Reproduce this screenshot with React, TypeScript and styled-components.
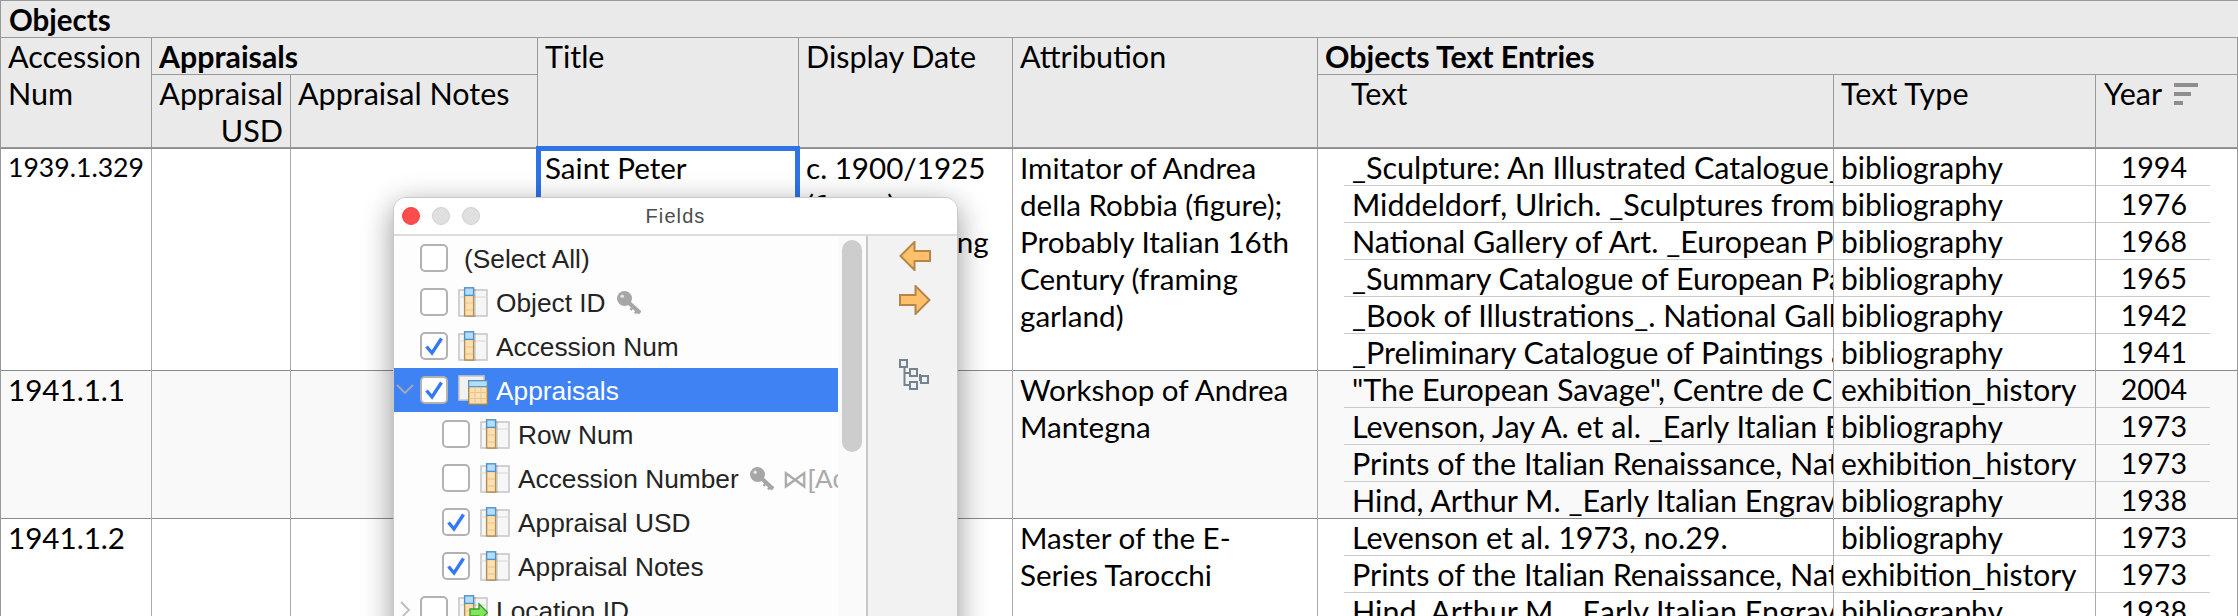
import React from "react";
import styled, { createGlobalStyle } from "styled-components";

const COLUMNS = "151px 139px 247px 261px 214px 305px 516px 262px 142px";

const GlobalStyle = createGlobalStyle`
  html, body {
    margin: 0;
    padding: 0;
    background: #fff;
  }
`;

const Page = styled.div`
  position: relative;
  width: 2238px;
  height: 616px;
  overflow: hidden;
  background: #fff;
  color: #000;
  font-family: Lato, "Open Sans", sans-serif;
  font-size: 29.6px;
  line-height: 37px;
`;

const Sheet = styled.div`
  width: 2238px;
  box-sizing: border-box;
  border-left: 1px solid #999;
`;

const TableName = styled.div`
  height: 36px;
  padding-left: 8px;
  border-top: 1px solid #999;
  border-bottom: 1px solid #999;
  background: #eaeaea;
  font-weight: 700;
  font-size: 29.5px;
`;

const HeaderGrid = styled.div`
  display: grid;
  grid-template-columns: ${COLUMNS};
  grid-template-rows: 37px 73px;
  height: 110px;
  background: #eaeaea;
  font-size: 30.5px;
`;

const HeaderCell = styled.div<{ $col: string; $row: string; $right?: boolean }>`
  grid-column: ${(p) => p.$col};
  grid-row: ${(p) => p.$row};
  box-sizing: border-box;
  padding: 0 7px;
  border-right: 1px solid #999;
  border-bottom: 1px solid #999;
  text-align: ${(p) => (p.$right ? "right" : "left")};
`;

const GroupCell = styled(HeaderCell)`
  font-weight: 700;
  font-size: 30.3px;
`;

const TextHeader = styled(HeaderCell)`
  padding-left: 33px;
`;

const YearHeader = styled(HeaderCell)`
  display: flex;
  align-items: flex-start;
  gap: 12px;
  padding-left: 8px;
`;

const SortIcon = styled.svg`
  width: 24px;
  height: 22px;
  margin-top: 8px;
  flex: none;
`;

const DataRow = styled.div<{ $even?: boolean; $tall?: boolean }>`
  display: grid;
  grid-template-columns: 151px 139px 247px 261px 214px 305px 920px;
  height: ${(p) => (p.$tall ? "222px" : "148px")};
  box-sizing: border-box;
  background: ${(p) => (p.$even ? "#f9f9f9" : "#fff")};
  border-top: 1px solid #8a8a8a;
`;

const Cell = styled.div<{ $size?: number }>`
  position: relative;
  box-sizing: border-box;
  padding: 0 7px;
  border-right: 1px solid #aaa;
  ${(p) => (p.$size ? `font-size: ${p.$size}px;` : "")}
`;

const AttributionCell = styled(Cell)`
  padding-right: 16px;
`;

const SelectedFrame = styled.div`
  position: absolute;
  top: -3px;
  left: -2px;
  right: -2px;
  bottom: -1px;
  border: 5px solid #2f74e6;
  pointer-events: none;
`;

const EntryList = styled.div`
  width: 920px;
  box-sizing: border-box;
  padding-left: 26px;
  padding-right: 27px;
  border-right: 1px solid #999;
`;

const EntryRow = styled.div`
  display: grid;
  grid-template-columns: 490px 262px 114px;
  height: 37px;
  box-sizing: border-box;
  border-bottom: 1px solid #ccc;

  &:last-child {
    border-bottom: 0;
  }
`;

const EntryText = styled.div`
  padding-left: 8px;
  font-size: 30.5px;
  white-space: nowrap;
  overflow: hidden;
  border-right: 1px solid #aaa;
`;

const EntryType = styled.div`
  padding-left: 7px;
  font-size: 30px;
  border-right: 1px solid #aaa;
`;

const EntryYear = styled.div`
  padding-right: 23px;
  font-size: 28.6px;
  text-align: right;
`;

const FieldsWindow = styled.div`
  position: absolute;
  left: 393px;
  top: 197px;
  width: 565px;
  height: 460px;
  box-sizing: border-box;
  border: 1px solid #c9c9c9;
  border-radius: 13px 13px 0 0;
  background: #fff;
  box-shadow: 0 8px 30px rgba(0, 0, 0, 0.42);
  overflow: hidden;
  font-family: "Liberation Sans", Arial, sans-serif;
  font-size: 26.3px;
  line-height: 44px;
  color: #242424;
`;

const TitleBar = styled.div`
  position: relative;
  display: flex;
  align-items: center;
  justify-content: center;
  height: 36px;
  border-bottom: 2px solid #dcdcdc;
  background: #fff;
  color: #4c4c4c;
  font-size: 20px;
  letter-spacing: 1.1px;
`;

const Lights = styled.div`
  position: absolute;
  left: 8px;
  top: 9px;
  display: flex;
  gap: 12px;
`;

const Light = styled.span<{ $red?: boolean }>`
  width: 18px;
  height: 18px;
  box-sizing: border-box;
  border-radius: 50%;
  background: ${(p) => (p.$red ? "#fc4d4d" : "#e0e0e0")};
  border: 1px solid ${(p) => (p.$red ? "#f04444" : "#cfcfcf")};
`;

const WindowBody = styled.div`
  display: flex;
  height: 420px;
`;

const FieldList = styled.div`
  width: 444px;
  flex: none;
  background: #fdfdfd;
  overflow: hidden;
`;

const FieldRow = styled.div<{ $selected?: boolean; $depth?: number }>`
  position: relative;
  display: flex;
  align-items: center;
  height: 44px;
  padding-left: ${(p) => 26 + (p.$depth || 0) * 22}px;
  white-space: nowrap;
  overflow: hidden;
  background: ${(p) => (p.$selected ? "#3f82f4" : "transparent")};
  color: ${(p) => (p.$selected ? "#fff" : "inherit")};
`;

const Chevron = styled.svg`
  position: absolute;
  left: 2px;
  top: 13px;
  width: 18px;
  height: 18px;
`;

const Checkbox = styled.span`
  display: flex;
  align-items: center;
  justify-content: center;
  width: 28px;
  height: 28px;
  flex: none;
  box-sizing: border-box;
  border: 2.5px solid #b2b2b2;
  border-radius: 5px;
  background: #fff;
`;

const IconSlot = styled.svg`
  width: 30px;
  height: 30px;
  flex: none;
  margin-left: 10px;
  margin-right: 8px;
`;

const Label = styled.span`
  margin-top: 2px;
`;

const PlainLabel = styled(Label)`
  margin-left: 16px;
`;

const KeyIcon = styled.svg`
  width: 24px;
  height: 24px;
  flex: none;
  margin-left: 11px;
  margin-top: 1px;
`;

const Relation = styled(Label)`
  margin-left: 8px;
  color: #aaa;
`;

const ScrollTrack = styled.div`
  width: 28px;
  flex: none;
  background: #fafafa;
  padding: 4px;
  box-sizing: border-box;
`;

const ScrollThumb = styled.div`
  width: 20px;
  height: 212px;
  border-radius: 10px;
  background: #cdcdcd;
`;

const SidePanel = styled.div`
  flex: 1;
  display: flex;
  flex-direction: column;
  align-items: flex-start;
  padding: 5px 0 0 31px;
  border-left: 2px solid #c8c8c8;
  background: #f2f2f2;
`;

const ArrowIcon = styled.svg`
  display: block;
  width: 32px;
  height: 30px;
  margin-bottom: 14px;
`;

const TreeIcon = styled.svg`
  display: block;
  width: 30px;
  height: 31px;
  margin-top: 30px;
`;

const CheckMark = () => (
  <svg width="20" height="20" viewBox="0 0 20 20">
    <path d="M2.5 10.5 L8 17 L17.5 2.5" fill="none" stroke="#3478f6" strokeWidth="3.4" />
  </svg>
);

const FieldGlyph = ({ arrow }: { arrow?: boolean }) => (
  <IconSlot viewBox="0 0 30 30">
    <rect x="1" y="3" width="28" height="26" fill="#f6f6f6" stroke="#c8c8c8" strokeWidth="1.6" />
    <line x1="1" y1="10" x2="29" y2="10" stroke="#dedede" strokeWidth="1.2" />
    <rect x="9" y="2" width="9" height="28" fill="#000" opacity="0.12" />
    <rect x="6.6" y="8" width="9" height="21" fill="#fde0ad" stroke="#b48c58" strokeWidth="1.4" />
    <line x1="7" y1="16" x2="15" y2="16" stroke="#e3c493" strokeWidth="1" />
    <line x1="7" y1="23" x2="15" y2="23" stroke="#e3c493" strokeWidth="1" />
    <rect x="6.6" y="0.8" width="9" height="7.6" fill="#b8dcf6" stroke="#4a93cc" strokeWidth="1.4" />
    {arrow && (
      <path
        d="M12 14 H21 V9 L29.5 17.5 L21 26 V21 H12 Z"
        fill="#7fe85a"
        stroke="#3f9c2e"
        strokeWidth="1.4"
      />
    )}
  </IconSlot>
);

const TableGlyph = () => (
  <IconSlot viewBox="0 0 30 30">
    <rect x="1" y="1" width="25" height="24" fill="#f2f2f2" stroke="#c8c8c8" strokeWidth="1.6" />
    <rect x="12" y="7" width="20" height="24" fill="#000" opacity="0.16" />
    <rect x="10.7" y="5.7" width="18.6" height="23.6" fill="#fde0ad" stroke="#a9824d" strokeWidth="1.4" />
    <rect x="10.7" y="5.7" width="18.6" height="6" fill="#b8dcf6" stroke="#4a93cc" strokeWidth="1.2" />
    <path d="M10.7 17.5 H29 M10.7 23.5 H29 M17 12 V29 M23 12 V29" stroke="#e3c493" strokeWidth="1" />
  </IconSlot>
);

const KeyGlyph = () => (
  <KeyIcon viewBox="0 0 24 24">
    <circle cx="7.5" cy="7.5" r="7.5" fill="#a6a6a6" />
    <circle cx="5.2" cy="5.2" r="1.8" fill="#e6e6e6" />
    <path d="M10.5 10.5 L23 22" stroke="#a6a6a6" strokeWidth="4.2" fill="none" />
    <path d="M16.5 15.5 L13.5 19 M20.5 19 L18 22.5" stroke="#a6a6a6" strokeWidth="2.4" fill="none" />
  </KeyIcon>
);

const ArrowGlyph = ({ left }: { left?: boolean }) => (
  <ArrowIcon viewBox="0 0 32 30">
    <path
      d={
        left
          ? "M1.5 15 L15.5 1 V10 H31 V20 H15.5 V29 Z"
          : "M30.5 15 L16.5 1 V10 H1 V20 H16.5 V29 Z"
      }
      fill="#ffc069"
      stroke="#b5854a"
      strokeWidth="2"
    />
  </ArrowIcon>
);

const fields = [
  { label: "Object ID", keyed: true, checked: false },
  { label: "Accession Num", checked: true },
];

const childFields = [
  { label: "Row Num", checked: false },
  { label: "Accession Number", checked: false, keyed: true, relation: "⋈[Accession Num]" },
  { label: "Appraisal USD", checked: true },
  { label: "Appraisal Notes", checked: true },
];

const rows = [
  {
    accession: "1939.1.329",
    accessionSize: 26.6,
    title: "Saint Peter",
    date: ["c. 1900/1925", "(figure), c.", "1500 (framing", "garland)"],
    attribution: "Imitator of Andrea della Robbia (figure); Probably Italian 16th Century (framing garland)",
    entries: [
      ["_Sculpture: An Illustrated Catalogue_. Washington, 1994", "bibliography", "1994"],
      ["Middeldorf, Ulrich. _Sculptures from the Samuel H. Kress", "bibliography", "1976"],
      ["National Gallery of Art. _European Paintings and Sculpture", "bibliography", "1968"],
      ["_Summary Catalogue of European Paintings and Sculpture", "bibliography", "1965"],
      ["_Book of Illustrations_. National Gallery of Art, Washington", "bibliography", "1942"],
      ["_Preliminary Catalogue of Paintings and Sculpture", "bibliography", "1941"],
    ],
  },
  {
    accession: "1941.1.1",
    attribution: "Workshop of Andrea Mantegna",
    entries: [
      ['"The European Savage", Centre de Culture', "exhibition_history", "2004"],
      ["Levenson, Jay A. et al. _Early Italian Engravings from", "bibliography", "1973"],
      ["Prints of the Italian Renaissance, National Gallery", "exhibition_history", "1973"],
      ["Hind, Arthur M. _Early Italian Engraving. A Critical", "bibliography", "1938"],
    ],
  },
  {
    accession: "1941.1.2",
    attribution: "Master of the E-Series Tarocchi",
    entries: [
      ["Levenson et al. 1973, no.29.", "bibliography", "1973"],
      ["Prints of the Italian Renaissance, National Gallery", "exhibition_history", "1973"],
      ["Hind, Arthur M. _Early Italian Engraving. A Critical", "bibliography", "1938"],
    ],
  },
];

export default function App() {
  return (
    <Page>
      <GlobalStyle />
      <Sheet>
        <TableName>Objects</TableName>
        <HeaderGrid>
          <HeaderCell $col="1" $row="1 / 3">Accession Num</HeaderCell>
          <GroupCell $col="2 / 4" $row="1">Appraisals</GroupCell>
          <HeaderCell $col="2" $row="2" $right>Appraisal USD</HeaderCell>
          <HeaderCell $col="3" $row="2">Appraisal Notes</HeaderCell>
          <HeaderCell $col="4" $row="1 / 3">Title</HeaderCell>
          <HeaderCell $col="5" $row="1 / 3">Display Date</HeaderCell>
          <HeaderCell $col="6" $row="1 / 3">Attribution</HeaderCell>
          <GroupCell $col="7 / 10" $row="1">Objects Text Entries</GroupCell>
          <TextHeader $col="7" $row="2">Text</TextHeader>
          <HeaderCell $col="8" $row="2">Text Type</HeaderCell>
          <YearHeader $col="9" $row="2">
            Year
            <SortIcon viewBox="0 0 24 22">
              <rect x="0" y="0" width="24" height="4" fill="#8e8e8e" />
              <rect x="0" y="9" width="17" height="4" fill="#8e8e8e" />
              <rect x="0" y="18" width="9" height="4" fill="#8e8e8e" />
            </SortIcon>
          </YearHeader>
        </HeaderGrid>
        {rows.map((row, i) => (
          <DataRow key={row.accession} $even={i === 1} $tall={i === 0}>
            <Cell $size={row.accessionSize}>{row.accession}</Cell>
            <Cell />
            <Cell />
            <Cell>
              {row.title}
              {i === 0 && <SelectedFrame />}
            </Cell>
            <Cell>
              {row.date?.map((line) => (
                <div key={line}>{line}</div>
              ))}
            </Cell>
            <AttributionCell>{row.attribution}</AttributionCell>
            <EntryList>
              {row.entries.map(([text, type, year]) => (
                <EntryRow key={text}>
                  <EntryText>{text}</EntryText>
                  <EntryType>{type}</EntryType>
                  <EntryYear>{year}</EntryYear>
                </EntryRow>
              ))}
            </EntryList>
          </DataRow>
        ))}
      </Sheet>

      <FieldsWindow>
        <TitleBar>
          <Lights>
            <Light $red />
            <Light />
            <Light />
          </Lights>
          Fields
        </TitleBar>
        <WindowBody>
          <FieldList>
            <FieldRow>
              <Checkbox />
              <PlainLabel>(Select All)</PlainLabel>
            </FieldRow>
            {fields.map((f) => (
              <FieldRow key={f.label}>
                <Checkbox>{f.checked && <CheckMark />}</Checkbox>
                <FieldGlyph />
                <Label>{f.label}</Label>
                {f.keyed && <KeyGlyph />}
              </FieldRow>
            ))}
            <FieldRow $selected>
              <Chevron viewBox="0 0 18 18">
                <path d="M1 4 L9 12 L17 4" fill="none" stroke="#a3a9b3" strokeWidth="1.8" />
              </Chevron>
              <Checkbox>
                <CheckMark />
              </Checkbox>
              <TableGlyph />
              <Label>Appraisals</Label>
            </FieldRow>
            {childFields.map((f) => (
              <FieldRow key={f.label} $depth={1}>
                <Checkbox>{f.checked && <CheckMark />}</Checkbox>
                <FieldGlyph />
                <Label>{f.label}</Label>
                {f.keyed && <KeyGlyph />}
                {f.relation && <Relation>{f.relation}</Relation>}
              </FieldRow>
            ))}
            <FieldRow>
              <Chevron viewBox="0 0 18 18">
                <path d="M5 1 L13 9 L5 17" fill="none" stroke="#bdbdbd" strokeWidth="1.8" />
              </Chevron>
              <Checkbox />
              <FieldGlyph arrow />
              <Label>Location ID</Label>
            </FieldRow>
          </FieldList>
          <ScrollTrack>
            <ScrollThumb />
          </ScrollTrack>
          <SidePanel>
            <ArrowGlyph left />
            <ArrowGlyph />
            <TreeIcon viewBox="0 0 30 31">
              <g fill="#f2f2f2" stroke="#74838f" strokeWidth="2">
                <path d="M5.5 8 V26 H13 M5.5 14 H13 M21 15 V21 H23" fill="none" />
                <rect x="1" y="1" width="7" height="7" />
                <rect x="11" y="10" width="7" height="7" />
                <rect x="22" y="17" width="7" height="7" />
                <rect x="11" y="23" width="7" height="7" />
              </g>
            </TreeIcon>
          </SidePanel>
        </WindowBody>
      </FieldsWindow>
    </Page>
  );
}
